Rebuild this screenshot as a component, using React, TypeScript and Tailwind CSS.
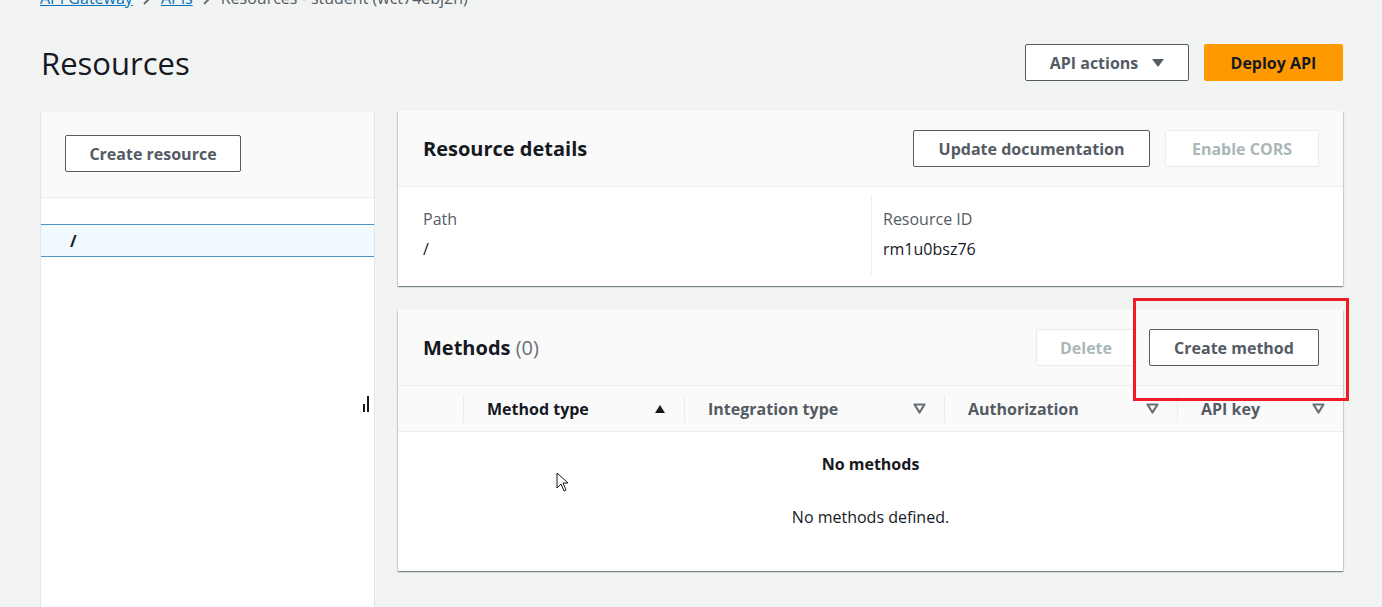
import React from "react";

const FONT = { fontFamily: '"Open Sans", "Noto Sans", Arial, sans-serif' };

function Chevron() {
  return (
    <svg width="10" height="14" viewBox="0 0 10 14" className="mx-[9px] text-[#687078]">
      <path d="M2 1l6 6-6 6" fill="none" stroke="currentColor" strokeWidth="2" />
    </svg>
  );
}

function Btn({ children, disabled, primary, className = "" }: { children: React.ReactNode; disabled?: boolean; primary?: boolean; className?: string }) {
  const tone = primary
    ? "bg-[#ff9900] border-[#ff9900] text-[#16191f]"
    : disabled
    ? "bg-white border-[#e9ebed] text-[#aab7b8]"
    : "bg-white border-[#545b64] text-[#545b64]";
  return (
    <button className={`h-[37px] flex items-center justify-center rounded-[2px] border text-[16px] font-bold ${tone} ${className}`}>
      {children}
    </button>
  );
}

function SortDown() {
  return (
    <svg width="13" height="11" viewBox="0 0 13 11">
      <path d="M1.5 1.5h10L6.5 9.5z" fill="none" stroke="#687078" strokeWidth="2.2" strokeLinejoin="round" />
    </svg>
  );
}

function SortUp() {
  return (
    <svg width="12" height="10" viewBox="0 0 12 10">
      <path d="M1 9h10L6 1z" fill="#16191f" />
    </svg>
  );
}

function HeadCell({ label, width, active }: { label: string; width: string; active?: boolean }) {
  return (
    <div className={`${width} h-full flex items-center`}>
      <div className="w-px h-[28px] bg-[#eaeded]" />
      <div className={`flex-1 flex items-center justify-between pl-[23px] pr-[18px] text-[16px] font-bold ${active ? "text-[#16191f]" : "text-[#545b64]"}`}>
        <span>{label}</span>
        {active ? <SortUp /> : <SortDown />}
      </div>
    </div>
  );
}

const cardShadow = "shadow-[0_1px_1px_0_rgba(0,28,36,0.35),1px_1px_1px_0_rgba(0,28,36,0.12),-1px_1px_1px_0_rgba(0,28,36,0.12)]";

export default function App() {
  return (
    <div style={FONT} className="relative h-[607px] w-[1382px] overflow-hidden bg-[#f2f3f3] pl-[40px] pr-[39px] text-[#16191f]">
      {/* breadcrumb */}
      <div className="-mt-[14px] flex h-[24px] items-center text-[16px] leading-[24px]">
        <a className="text-[#0073bb] underline">API Gateway</a>
        <Chevron />
        <a className="text-[#0073bb] underline">APIs</a>
        <Chevron />
        <span className="text-[#545b64]">Resources - student (wct74ebj2h)</span>
      </div>

      {/* header */}
      <div className="mt-[34px] flex h-[37px] items-center justify-between">
        <h1 className="ml-px text-[31px] font-normal leading-[36px]">Resources</h1>
        <div className="flex gap-[15px]">
          <Btn className="w-[164px] gap-[14px]">
            API actions
            <svg width="12" height="10" viewBox="0 0 12 10">
              <path d="M0 1h12L6 9z" fill="#545b64" />
            </svg>
          </Btn>
          <Btn primary className="w-[139px]">Deploy API</Btn>
        </div>
      </div>

      <div className="mt-[30px] flex gap-[23px]">
        {/* left panel */}
        <div className="relative mt-px h-[520px] w-[335px] shrink-0 border-x border-[#e4e6e6] bg-white">
          <div className="h-[86px] border-b border-[#eaeded] bg-[#fafafa] pl-[24px] pt-[23px]">
            <Btn className="w-[176px]">Create resource</Btn>
          </div>
          <div className="mt-[26px] flex h-[33px] items-center border-y border-[#4f95c2] bg-[#f1faff] pl-[29px] text-[16px] font-bold">
            /
          </div>
          <div className="absolute right-[5px] top-[284px] flex items-end gap-[2px]">
            <div className="h-[8px] w-[2px] bg-[#16191f]" />
            <div className="h-[16px] w-[2px] bg-[#16191f]" />
          </div>
        </div>

        {/* right column */}
        <div className="flex flex-1 flex-col gap-[24px]">
          <div className={`bg-white ${cardShadow}`}>
            <div className="flex h-[76px] items-center justify-between border-b border-[#eaeded] bg-[#fafafa] pl-[25px] pr-[24px]">
              <h2 className="text-[20px] font-bold">Resource details</h2>
              <div className="flex gap-[15px]">
                <Btn className="w-[237px]">Update documentation</Btn>
                <Btn disabled className="w-[154px]">Enable CORS</Btn>
              </div>
            </div>
            <div className="grid h-[99px] grid-cols-[448px_1fr] pb-[12px] pl-[25px] pt-[8px] text-[16px]">
              <div className="pt-[12px]">
                <div className="leading-[24px] text-[#545b64]">Path</div>
                <div className="mt-[6px] leading-[24px]">/</div>
              </div>
              <div className="border-l border-[#eaeded] pl-[11px] pt-[12px]">
                <div className="leading-[24px] text-[#545b64]">Resource ID</div>
                <div className="mt-[6px] leading-[24px]">rm1u0bsz76</div>
              </div>
            </div>
          </div>

          <div className={`bg-white ${cardShadow}`}>
            <div className="flex h-[76px] items-center justify-between border-b border-[#eaeded] bg-[#fafafa] pl-[25px] pr-[24px]">
              <h2 className="text-[20px] font-bold">
                Methods <span className="font-normal text-[#687078]">(0)</span>
              </h2>
              <div className="flex gap-[13px]">
                <Btn disabled className="w-[100px]">Delete</Btn>
                <Btn className="w-[170px]">Create method</Btn>
              </div>
            </div>
            <div className="flex h-[46px] items-center border-b border-[#eaeded] bg-[#fafafa]">
              <div className="w-[65px] shrink-0" />
              <HeadCell label="Method type" width="w-[221px]" active />
              <HeadCell label="Integration type" width="w-[260px]" />
              <HeadCell label="Authorization" width="w-[233px]" />
              <HeadCell label="API key" width="flex-1" />
            </div>
            <div className="flex h-[139px] flex-col items-center pt-[22px] text-[16px]">
              <div className="font-bold leading-[20px]">No methods</div>
              <div className="mt-[33px] leading-[20px]">No methods defined.</div>
            </div>
          </div>
        </div>
      </div>

      {/* highlight */}
      <div className="absolute left-[1133px] top-[298px] h-[103px] w-[216px] border-[3px] border-[#ee1c25]" />

      {/* mouse cursor */}
      <svg className="absolute left-[556px] top-[472px]" width="14" height="20" viewBox="0 0 14 20">
        <path d="M1 1v15l4-4 3 7 2-1-3-7h5z" fill="#fff" stroke="#16191f" strokeWidth="1" strokeLinejoin="round" />
      </svg>
    </div>
  );
}
